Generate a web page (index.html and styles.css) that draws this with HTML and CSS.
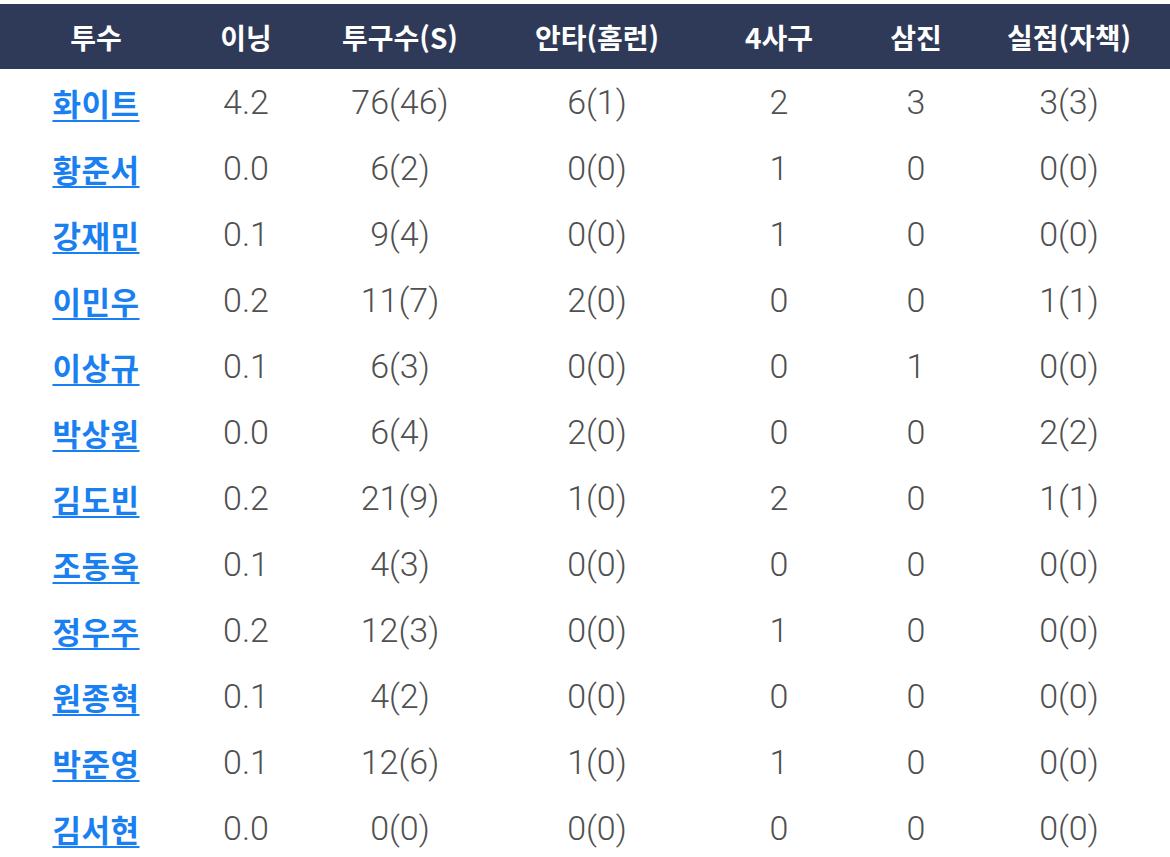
FILE: index.html
```html
<!DOCTYPE html>
<html lang="ko">
<head>
<meta charset="utf-8">
<link rel="stylesheet" href="styles.css">
</head>
<body>
<table class="stats">
  <colgroup>
    <col class="c1"><col class="c2"><col class="c3"><col class="c4"><col class="c5"><col class="c6"><col class="c7">
  </colgroup>
  <thead>
    <tr><th>투수</th><th>이닝</th><th>투구수(S)</th><th>안타(홈런)</th><th>4사구</th><th>삼진</th><th>실점(자책)</th></tr>
  </thead>
  <tbody>
    <tr><td><a href="#">화이트</a></td><td>4.2</td><td>76(46)</td><td>6(1)</td><td>2</td><td>3</td><td>3(3)</td></tr>
    <tr><td><a href="#">황준서</a></td><td>0.0</td><td>6(2)</td><td>0(0)</td><td>1</td><td>0</td><td>0(0)</td></tr>
    <tr><td><a href="#">강재민</a></td><td>0.1</td><td>9(4)</td><td>0(0)</td><td>1</td><td>0</td><td>0(0)</td></tr>
    <tr><td><a href="#">이민우</a></td><td>0.2</td><td>11(7)</td><td>2(0)</td><td>0</td><td>0</td><td>1(1)</td></tr>
    <tr><td><a href="#">이상규</a></td><td>0.1</td><td>6(3)</td><td>0(0)</td><td>0</td><td>1</td><td>0(0)</td></tr>
    <tr><td><a href="#">박상원</a></td><td>0.0</td><td>6(4)</td><td>2(0)</td><td>0</td><td>0</td><td>2(2)</td></tr>
    <tr><td><a href="#">김도빈</a></td><td>0.2</td><td>21(9)</td><td>1(0)</td><td>2</td><td>0</td><td>1(1)</td></tr>
    <tr><td><a href="#">조동욱</a></td><td>0.1</td><td>4(3)</td><td>0(0)</td><td>0</td><td>0</td><td>0(0)</td></tr>
    <tr><td><a href="#">정우주</a></td><td>0.2</td><td>12(3)</td><td>0(0)</td><td>1</td><td>0</td><td>0(0)</td></tr>
    <tr><td><a href="#">원종혁</a></td><td>0.1</td><td>4(2)</td><td>0(0)</td><td>0</td><td>0</td><td>0(0)</td></tr>
    <tr><td><a href="#">박준영</a></td><td>0.1</td><td>12(6)</td><td>1(0)</td><td>1</td><td>0</td><td>0(0)</td></tr>
    <tr><td><a href="#">김서현</a></td><td>0.0</td><td>0(0)</td><td>0(0)</td><td>0</td><td>0</td><td>0(0)</td></tr>
  </tbody>
</table>
</body>
</html>
```

FILE: styles.css
```css
html, body {
  margin: 0;
  padding: 0;
  background: #ffffff;
}
body {
  padding-top: 4px;
  font-family: "Roboto", "Noto Sans CJK KR", sans-serif;
}
.stats {
  width: 1170px;
  border-collapse: collapse;
  table-layout: fixed;
}
.c1 { width: 192px; }
.c2 { width: 108px; }
.c3 { width: 200px; }
.c4 { width: 194px; }
.c5 { width: 170px; }
.c6 { width: 104px; }
.c7 { width: 202px; }
.stats thead tr {
  background: #2f3a58;
  height: 65px;
}
.stats th {
  color: #ffffff;
  font-family: "Noto Sans CJK KR", sans-serif;
  font-weight: 700;
  font-size: 28px;
  text-align: center;
  padding: 0;
  vertical-align: middle;
}
.stats td {
  height: 66px;
  padding: 0;
  text-align: center;
  vertical-align: middle;
  color: #505050;
  font-size: 34px;
  font-weight: 300;
}
.stats td a {
  color: #1a7ff0;
  font-family: "Noto Sans CJK KR", sans-serif;
  font-weight: 700;
  font-size: 31px;
  letter-spacing: 0.5px;
  text-decoration: underline;
  text-underline-offset: 4px;
  text-decoration-thickness: 2px;
}
```
